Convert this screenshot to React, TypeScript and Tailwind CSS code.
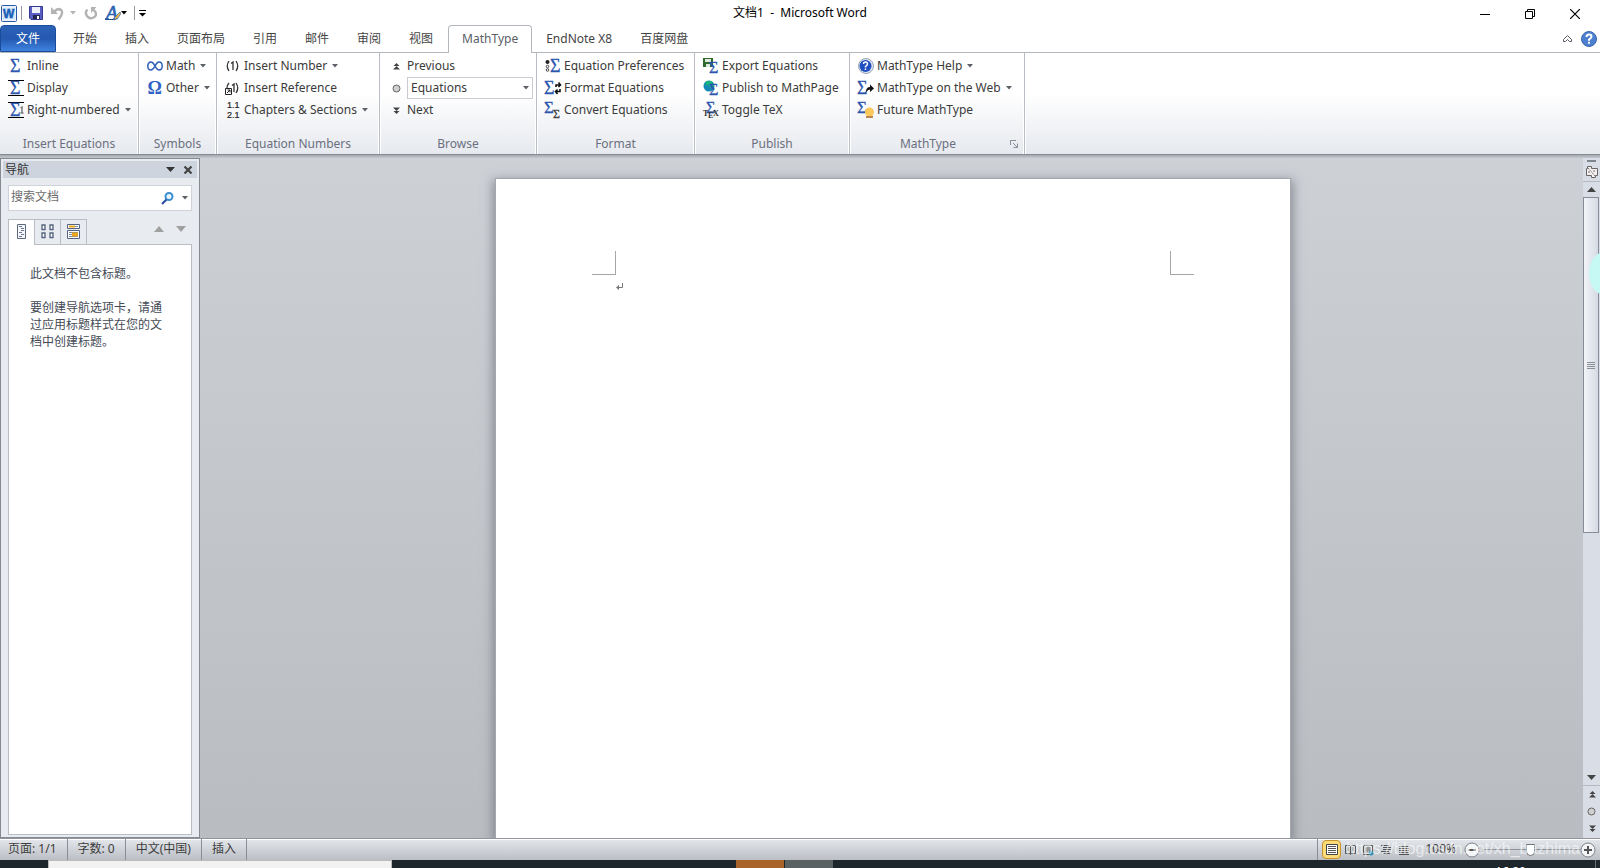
import * as React from 'react';

const Caret: React.FC<{ className?: string }> = ({ className = 'text-[#5c6067]' }) => (
  <svg className={`shrink-0 ${className}`} width="6" height="4" viewBox="0 0 6 4" aria-hidden="true">
    <path d="M0 0h6L3 3.5z" fill="currentColor" />
  </svg>
);

const Icon: React.FC<{ children: React.ReactNode }> = ({ children }) => (
  <svg className="shrink-0 overflow-visible" width="16" height="16" viewBox="0 0 16 16" aria-hidden="true">
    {children}
  </svg>
);

type SigmaProps = { x?: number; y?: number; size?: number; fill?: string };

const Sigma: React.FC<SigmaProps> = ({ x = 2, y = 14, size = 18, fill = '#2a56ad' }) => (
  <text
    x={x}
    y={y}
    fontSize={size}
    fill={fill}
    stroke={fill}
    strokeWidth="0.3"
    fontFamily="Liberation Serif, serif"
  >
    Σ
  </text>
);

const Bars = () => <path d="M0 .5h16M0 15.5h16" stroke="#000" />;

const InlineIcon = () => (
  <Icon>
    <Sigma />
  </Icon>
);

const DisplayIcon = () => (
  <Icon>
    <Bars />
    <Sigma />
  </Icon>
);

const RightNumberedIcon = () => (
  <Icon>
    <Bars />
    <Sigma />
    <path d="M12.500 6l1.500-1v6M12.500 11h3" stroke="#777" strokeWidth="1.4" fill="none" />
  </Icon>
);

const InfinityIcon = () => (
  <Icon>
    <path
      d="M8 8C6.500 5 5.500 4 4 4C2 4 .8 5.800.8 8S2 12 4 12C5.500 12 6.500 11 8 8S10.500 4 12 4C14 4 15.200 5.800 15.200 8S14 12 12 12C10.500 12 9.500 11 8 8"
      fill="none"
      stroke="#2f5fb8"
      strokeWidth="1.500"
    />
  </Icon>
);

const OmegaIcon = () => (
  <Icon>
    <text x="0.500" y="14" fontSize="18" fontWeight="700" fill="#2f62c4" fontFamily="Liberation Serif, serif">
      Ω
    </text>
  </Icon>
);

const InsertNumberIcon = () => (
  <Icon>
    <path d="M4 3Q.5 8 4 13M11 3q3.500 5 0 10M6 5.500L8 4v8" fill="none" stroke="#333" strokeWidth="1.300" />
  </Icon>
);

const InsertReferenceIcon = () => (
  <Icon>
    <path d="M4 3Q2 5 2 8M11 3q3.500 5 0 10M7 5.500L9 4v8" fill="none" stroke="#333" strokeWidth="1.300" />
    <path d="M.5 8.500h6v6h-6z" fill="#fff" stroke="#222" />
    <path d="M2 13l3-3M2.500 10H5v2.500" fill="none" stroke="#222" />
  </Icon>
);

const ChaptersIcon = () => (
  <Icon>
    <g fontSize="9" fill="#222" stroke="#222" strokeWidth="0.200" fontFamily="Liberation Sans, sans-serif">
      <text x="2" y="6">
        1.1
      </text>
      <text x="2" y="16">
        2.1
      </text>
    </g>
  </Icon>
);

const DoubleArrow: React.FC<{ down?: boolean }> = ({ down }) => (
  <svg className={down ? 'ml-px rotate-180' : 'ml-px'} width="7" height="7" viewBox="0 0 7 7" aria-hidden="true">
    <path d="M3.500 0L6.500 3h-6zM3.500 3L7 6.500H0z" fill="#444" />
  </svg>
);

const Dot = () => (
  <svg width="9" height="9" viewBox="0 0 9 9" aria-hidden="true">
    <circle cx="4.500" cy="4.500" r="3.500" fill="#d0d0d0" stroke="#666" />
  </svg>
);

const PreferencesIcon = () => (
  <Icon>
    <circle cx="2.500" cy="4" r="2" fill="#222" />
    <circle cx="2.500" cy="8.500" r="1.300" fill="#fff" stroke="#444" />
    <circle cx="2.500" cy="12" r="1.300" fill="#fff" stroke="#444" />
    <Sigma x={5} />
  </Icon>
);

const FormatIcon = () => (
  <Icon>
    <Sigma x={-1} />
    <path
      d="M11 7V5h4M13.500 2.500L15.500 5l-2 2M15 9v2.500h-4M12.500 9.500l-2 2 2 2.500"
      fill="none"
      stroke="#111"
      strokeWidth="1.600"
    />
  </Icon>
);

const ConvertIcon = () => (
  <Icon>
    <Sigma x={-1} y={11} size={17} />
    <Sigma x={8} y={16} size={12} fill="#444" />
  </Icon>
);

const ExportIcon = () => (
  <Icon>
    <path d="M0 0h10v9H0z" fill="#2f6b2c" />
    <path d="M2 1h6v3H2zM3 6h4v3H3z" fill="#dfe9dd" />
    <Sigma x={6} y={15} size={16} />
  </Icon>
);

const PublishIcon = () => (
  <Icon>
    <circle cx="6" cy="6" r="5.500" fill="#1788b5" />
    <path d="M3 1.500q4-2 7 1l1 4-4 1-2-3-3 1z" fill="#18b57a" />
    <Sigma x={6} y={15} size={16} />
  </Icon>
);

const TexIcon = () => (
  <Icon>
    <Sigma x={3} y={11} size={16} />
    <g fontSize="8" fontWeight="700" fill="#333" fontFamily="Liberation Serif, serif">
      <text x="0" y="14">
        T
      </text>
      <text x="5" y="16">
        E
      </text>
      <text x="10" y="14">
        X
      </text>
    </g>
  </Icon>
);

const HelpIcon = () => (
  <Icon>
    <circle cx="8" cy="8" r="7.500" fill="#dfe5ef" stroke="#9aa5ba" />
    <circle cx="7.500" cy="8" r="6" fill="#1f4fc0" />
    <path d="M5.500 6q0-2 2-2t2 2q0 1-2 2.500v1M7.500 10.500V12" fill="none" stroke="#fff" strokeWidth="1.500" />
  </Icon>
);

const WebIcon = () => (
  <Icon>
    <Sigma x={-1} />
    <path d="M8 12q0-5 4-5V4.500l4 4-4 3.500V9.500q-2 0-4 2.500z" fill="#111" />
  </Icon>
);

const FutureIcon = () => (
  <Icon>
    <Sigma x={-1} y={11} size={17} />
    <circle cx="11.500" cy="10" r="4.500" fill="#fbc85a" />
    <path d="M8 15h7" stroke="#a8641c" strokeWidth="1.500" />
  </Icon>
);

type Command = { label: string; icon: React.ReactNode; menu?: boolean };

const CommandButton: React.FC<{ command: Command }> = ({ command }) => (
  <button type="button" className="flex h-[22px] items-center gap-[3px] whitespace-nowrap text-[#3b3b3b]">
    {command.icon}
    <span>{command.label}</span>
    {command.menu && (
      <span className="pl-0.5">
        <Caret />
      </span>
    )}
  </button>
);

type GroupProps = { title: string; width: string; launcher?: boolean; children: React.ReactNode };

const Group: React.FC<GroupProps> = ({ title, width, launcher, children }) => (
  <section
    className={`relative flex shrink-0 flex-col border-r border-[#b9bdc5] pt-0.5 shadow-[1px_0_0_#fff,inset_-1px_0_0_#fff] ${width}`}
  >
    <div className="flex flex-1 flex-col items-start pl-2">{children}</div>
    <div className="flex h-5 items-center">
      <h2 className="flex-1 text-center leading-5 text-[#6b7080]">{title}</h2>
      {launcher && (
        <button type="button" aria-label="MathType options" className="w-[18px] pl-1">
          <svg width="8" height="8" viewBox="0 0 8 8">
            <path d="M.5 5V.5H6M3 3l4 4M7.500 3.500v4h-4" fill="none" stroke="#8a8f98" />
          </svg>
        </button>
      )}
    </div>
  </section>
);

const equationCommands: Command[] = [
  { label: 'Inline', icon: <InlineIcon /> },
  { label: 'Display', icon: <DisplayIcon /> },
  { label: 'Right-numbered', icon: <RightNumberedIcon />, menu: true },
];
const symbolCommands: Command[] = [
  { label: 'Math', icon: <InfinityIcon />, menu: true },
  { label: 'Other', icon: <OmegaIcon />, menu: true },
];
const numberCommands: Command[] = [
  { label: 'Insert Number', icon: <InsertNumberIcon />, menu: true },
  { label: 'Insert Reference', icon: <InsertReferenceIcon /> },
  { label: 'Chapters & Sections', icon: <ChaptersIcon />, menu: true },
];
const formatCommands: Command[] = [
  { label: 'Equation Preferences', icon: <PreferencesIcon /> },
  { label: 'Format Equations', icon: <FormatIcon /> },
  { label: 'Convert Equations', icon: <ConvertIcon /> },
];
const publishCommands: Command[] = [
  { label: 'Export Equations', icon: <ExportIcon /> },
  { label: 'Publish to MathPage', icon: <PublishIcon /> },
  { label: 'Toggle TeX', icon: <TexIcon /> },
];
const mathTypeCommands: Command[] = [
  { label: 'MathType Help', icon: <HelpIcon />, menu: true },
  { label: 'MathType on the Web', icon: <WebIcon />, menu: true },
  { label: 'Future MathType', icon: <FutureIcon /> },
];

const renderCommands = (commands: Command[]) =>
  commands.map((command) => <CommandButton key={command.label} command={command} />);

const QuickAccess = () => (
  <div className="flex items-center pl-px">
    <svg width="16" height="17" viewBox="0 0 16 17" aria-hidden="true">
      <rect x=".5" y=".5" width="15" height="16" rx="1" fill="#e9f1fb" stroke="#2b5aa6" />
      <rect x="2" y="3" width="12" height="11" fill="#cfe6fa" />
      <text x="2" y="13" fontSize="12" fontWeight="700" fill="#1c5fb8" stroke="#1c5fb8" strokeWidth="0.500" fontFamily="Liberation Sans, sans-serif">
        W
      </text>
    </svg>
    <span className="ml-1 h-3.5 w-px bg-[#9a9a9a]" />
    <button type="button" aria-label="保存" className="ml-[7px]">
      <svg width="14" height="14" viewBox="0 0 14 14">
        <path d="M.5.5h13v13H2L.5 12z" fill="#5b5fc4" stroke="#34388f" />
        <path d="M3 1h8v6H3z" fill="#eef1fa" />
        <path d="M4 9h7v4H4z" fill="#23264f" />
        <path d="M8 10h2v3H8z" fill="#fff" />
      </svg>
    </button>
    <button type="button" aria-label="撤消" className="ml-2 flex items-center gap-1.5">
      <svg width="13" height="13" viewBox="0 0 13 13">
        <path d="M3 5q4-4.500 7-2t-2.500 9.500" fill="none" stroke="#b3b3b3" strokeWidth="2.500" />
        <path d="M0 0v7h7z" fill="#b3b3b3" />
      </svg>
      <Caret className="text-[#b3b3b3]" />
    </button>
    <button type="button" aria-label="重复" className="ml-2">
      <svg width="13" height="13" viewBox="0 0 13 13">
        <path d="M3.500 2.500q-3 3-.5 6.500t6.500 1.500T11 4.500L9 2.500" fill="none" stroke="#b3b3b3" strokeWidth="2.400" />
        <path d="M7 0h5.500L7 6z" fill="#b3b3b3" />
      </svg>
    </button>
    <button type="button" aria-label="文本效果" className="ml-2 flex items-center">
      <svg width="16" height="17" viewBox="0 0 16 17">
        <text x="1" y="14" fontSize="19" fontStyle="italic" fill="#2a62b4" stroke="#2a62b4" strokeWidth="0.600" fontFamily="Liberation Serif, serif">
          A
        </text>
        <path d="M0 14.500h10" stroke="#24508f" />
        <path d="M9 15l1-3 5-5 1 1.500-3.500 5z" fill="#e6b54a" stroke="#3d6daf" strokeWidth=".8" />
      </svg>
      <Caret className="text-black" />
    </button>
    <span className="ml-[7px] h-3.5 w-px bg-[#9a9a9a]" />
    <button type="button" aria-label="自定义快速访问工具栏" className="ml-1">
      <svg width="7" height="7" viewBox="0 0 7 7">
        <path d="M0 .5h7" stroke="#000" />
        <path d="M0 3h7L3.500 6.500z" />
      </svg>
    </button>
  </div>
);

const WindowButtons = () => (
  <div className="flex justify-end pr-[3px] pt-0.5">
    <button type="button" aria-label="最小化" className="flex w-[45px] items-center justify-center">
      <svg width="10" height="10" viewBox="0 0 10 10">
        <path d="M0 5.500h10" stroke="#000" />
      </svg>
    </button>
    <button type="button" aria-label="还原" className="flex w-[45px] items-center justify-center">
      <svg width="10" height="10" viewBox="0 0 10 10">
        <path d="M.5 2.500h7v7h-7zM2.500 2V.5h7v7H8" fill="none" stroke="#000" />
      </svg>
    </button>
    <button type="button" aria-label="关闭" className="flex w-[45px] items-center justify-center">
      <svg width="10" height="10" viewBox="0 0 10 10">
        <path d="M0 0l10 10M10 0L0 10" stroke="#000" strokeWidth="1.200" />
      </svg>
    </button>
  </div>
);

const tabs = ['开始', '插入', '页面布局', '引用', '邮件', '审阅', '视图', 'MathType', 'EndNote X8', '百度网盘'];

const RibbonTabs = () => (
  <nav className="flex h-[27px] text-[#444]">
    <button
      type="button"
      className="mr-[3px] h-[27px] w-14 rounded-t-sm border border-[#1b4c9c] bg-linear-to-b from-[#2b62b5] via-[#2459b0] to-[#3f83e0] text-white"
    >
      文件
    </button>
    {tabs.map((tab) =>
      tab === 'MathType' ? (
        <button
          key={tab}
          type="button"
          aria-current="page"
          className="relative z-10 ml-px h-7 rounded-t-sm border border-b-0 border-[#b3b7be] bg-white px-[13px] pb-px text-[#5a5e66]"
        >
          {tab}
        </button>
      ) : (
        <button key={tab} type="button" className="px-3.5">
          {tab}
        </button>
      ),
    )}
    <div className="flex flex-1 items-center justify-end gap-[9px] pr-[3px]">
      <button type="button" aria-label="功能区最小化">
        <svg width="9" height="7" viewBox="0 0 9 7">
          <path d="M.5 4.500l4-4 4 4v2h-2l-2-2-2 2h-2z" fill="#fff" stroke="#555b66" />
        </svg>
      </button>
      <button type="button" aria-label="帮助">
        <svg width="16" height="16" viewBox="0 0 16 16">
          <circle cx="8" cy="8" r="7.500" fill="#4c80cf" stroke="#3a67b0" />
          <path d="M5.500 6q0-2.500 2.500-2.500t2.500 2.300q0 1.200-2.500 2.700v1.200M8 10.800v1.900" fill="none" stroke="#fff" strokeWidth="2" />
        </svg>
      </button>
    </div>
  </nav>
);

const Ribbon = () => (
  <div className="flex h-[103px] border-t border-b border-t-[#b3b7be] border-b-[#868b93] bg-linear-to-b from-white from-40% to-[#e6e9ee]">
    <Group title="Insert Equations" width="w-[139px]">
      {renderCommands(equationCommands)}
    </Group>
    <Group title="Symbols" width="w-[78px]">
      {renderCommands(symbolCommands)}
    </Group>
    <Group title="Equation Numbers" width="w-[163px]">
      {renderCommands(numberCommands)}
    </Group>
    <Group title="Browse" width="w-[157px]">
      <div className="grid grid-cols-[9px_126px] items-center gap-x-1.5 pl-1 text-[#3b3b3b]">
        <DoubleArrow />
        <button type="button" className="h-[22px] text-left">
          Previous
        </button>
        <Dot />
        <div className="relative flex h-[22px] items-center">
          <select
            aria-label="Browse by"
            className="h-[22px] w-full appearance-none border border-[#c9ccd2] bg-white pl-[3px] text-[#3b3b3b]"
          >
            <option>Equations</option>
          </select>
          <span className="pointer-events-none absolute right-1 flex">
            <Caret />
          </span>
        </div>
        <DoubleArrow down />
        <button type="button" className="h-[22px] text-left">
          Next
        </button>
      </div>
    </Group>
    <Group title="Format" width="w-[158px]">
      {renderCommands(formatCommands)}
    </Group>
    <Group title="Publish" width="w-[155px]">
      {renderCommands(publishCommands)}
    </Group>
    <Group title="MathType" width="w-[175px]" launcher>
      {renderCommands(mathTypeCommands)}
    </Group>
  </div>
);

const NavigationPane = () => (
  <aside className="flex w-[200px] shrink-0 flex-col border border-[#868b93] bg-[#e8ebf0]">
    <header className="mx-0.5 mt-0.5 flex h-[17px] items-center bg-[#cdd4de] pr-[5px] pl-0.5 text-[#333]">
      <h2 className="flex-1 leading-4">导航</h2>
      <button type="button" aria-label="任务窗格选项">
        <svg width="9" height="5" viewBox="0 0 9 5">
          <path d="M0 0h9L4.500 5z" fill="#333" />
        </svg>
      </button>
      <button type="button" aria-label="关闭窗格" className="ml-[9px]">
        <svg width="8" height="8" viewBox="0 0 8 8">
          <path d="M.5.5l7 7M7.500.5l-7 7" stroke="#444" strokeWidth="2.200" />
        </svg>
      </button>
    </header>
    <div className="mx-[7px] mt-[7px] flex h-[26px] items-center border border-[#cfd2d8] bg-white pr-[3px]">
      <input
        type="text"
        aria-label="搜索文档"
        placeholder="搜索文档"
        className="min-w-0 flex-1 pb-0.5 pl-0.5 outline-none placeholder:text-[#6d6d6d]"
      />
      <button type="button" aria-label="搜索" className="mr-2">
        <svg width="13" height="13" viewBox="0 0 13 13">
          <circle cx="8" cy="4.500" r="3.500" fill="#eaf6fd" stroke="#3a8fd0" strokeWidth="2" />
          <path d="M5.500 7.500L1 12" stroke="#2b4fa3" strokeWidth="2.200" />
        </svg>
      </button>
      <Caret />
    </div>
    <div className="mx-[7px] mt-2 flex h-[26px]">
      <button
        type="button"
        aria-label="浏览标题"
        className="relative z-10 flex w-[26px] items-center justify-center border-t border-l border-[#b9bdc4] bg-white pb-0.5"
      >
        <svg width="9" height="15" viewBox="0 0 9 15">
          <path d="M.5.5h8v14h-8z" fill="#f3f6fb" stroke="#5b6880" />
          <path d="M2 2.500h3M4 4.500h3M4 6.500h3M2 8.500h3M4 10.500h3M2 12.500h3" stroke="#6d7a92" />
        </svg>
      </button>
      <button
        type="button"
        aria-label="浏览页面"
        className="flex w-[27px] items-center justify-center border border-[#b9bdc4] pb-0.5"
      >
        <svg width="13" height="15" viewBox="0 0 13 15">
          <path d="M1 1h3v4.500H1zM9 1h3v4.500H9zM1 9h3v4.500H1zM9 9h3v4.500H9z" fill="#fff" stroke="#54637f" strokeWidth="1.300" />
        </svg>
      </button>
      <button
        type="button"
        aria-label="浏览搜索结果"
        className="flex w-[26px] items-center justify-center border border-l-0 border-[#b9bdc4] pb-0.5"
      >
        <svg width="13" height="15" viewBox="0 0 13 15">
          <path d="M.5.5h12v4H.5zM.5 6.500h12v8H.5z" fill="#fff" stroke="#54637f" />
          <path d="M2 8.500h9M2 10.500h9M2 12.500h9M2 2.500h9" stroke="#7b879d" />
          <path d="M2 1.500h6v2H2zM5 8.500h6v4H5z" fill="#eba81e" />
        </svg>
      </button>
      <div className="flex flex-1 items-start justify-end gap-3 border-b border-[#b9bdc4] pt-[7px] pr-1.5">
        <button type="button" aria-label="上一标题">
          <svg width="10" height="6" viewBox="0 0 10 6">
            <path d="M0 6h10L5 0z" fill="#a0a0a0" />
          </svg>
        </button>
        <button type="button" aria-label="下一标题">
          <svg width="10" height="6" viewBox="0 0 10 6">
            <path d="M0 0h10L5 6z" fill="#a0a0a0" />
          </svg>
        </button>
      </div>
    </div>
    <div className="mx-[7px] mb-0.5 flex-1 border border-t-0 border-[#b9bdc4] bg-white px-[21px] pt-5 leading-[17px] text-[#444a55]">
      <p>此文档不包含标题。</p>
      <p className="mt-[17px]">要创建导航选项卡，请通过应用标题样式在您的文档中创建标题。</p>
    </div>
  </aside>
);

const DocumentArea = () => (
  <main className="flex flex-1 justify-center overflow-hidden bg-linear-to-b from-[#cdd0d5] to-[#b9bcc0] pt-5 pl-[3px]">
    <article className="flex w-[796px] shrink-0 items-start justify-between border border-b-0 border-[#a4a8ae] bg-white px-24 pt-[72px] shadow-[0_4px_10px_2px_rgba(90,95,105,0.6)]">
      <div>
        <div className="size-6 border-r border-b border-[#a6a6a6]" />
        <svg className="mt-2 ml-6" width="7" height="7" viewBox="0 0 7 7" aria-hidden="true">
          <path d="M6.500 0v4.500H1" fill="none" stroke="#777" />
          <path d="M0 4.500L3 2v5z" fill="#777" />
        </svg>
      </div>
      <div className="size-6 border-b border-l border-[#a6a6a6]" />
    </article>
  </main>
);

const ScrollRail = () => (
  <div className="relative flex w-[17px] shrink-0 flex-col items-center overflow-hidden bg-[#d9dde6]">
    <span className="mt-0.5 h-0.5 w-[9px] shrink-0 bg-[#7f858c]" />
    <button type="button" aria-label="标尺" className="mt-1 h-3">
      <svg width="12" height="12" viewBox="0 0 12 12">
        <path d="M1.500.5h4v2h6v7h-2v2h-4v-2h-5v-7h1z" fill="#f4eef0" stroke="#666" />
        <path d="M2 2l7 8M8 4v2M3 5v2" stroke="#777" strokeDasharray="2 1" />
      </svg>
    </button>
    <span className="mt-[3px] h-px w-full shrink-0 bg-[#b4b9c3]" />
    <button type="button" aria-label="向上滚动" className="flex h-[15px] shrink-0 items-center">
      <svg width="9" height="5" viewBox="0 0 9 5">
        <path d="M0 5h9L4.500 0z" fill="#444" />
      </svg>
    </button>
    <div className="flex w-full flex-1 flex-col">
      <div className="flex h-[336px] w-4 flex-col items-center justify-center gap-px border border-[#868c98] bg-linear-to-r from-[#f2f4f8] to-[#d5dae3]">
        <span className="h-px w-2 bg-[#8a8f98]" />
        <span className="h-px w-2 bg-[#8a8f98]" />
        <span className="h-px w-2 bg-[#8a8f98]" />
        <span className="h-px w-2 bg-[#8a8f98]" />
      </div>
    </div>
    <button type="button" aria-label="向下滚动" className="flex h-4 items-center">
      <svg width="9" height="5" viewBox="0 0 9 5">
        <path d="M0 0h9L4.500 5z" fill="#444" />
      </svg>
    </button>
    <div className="flex w-full flex-col items-center border-t border-[#b4b9c3] pb-px">
      <button type="button" aria-label="前一页" className="flex h-[17px] items-center">
        <DoubleArrow />
      </button>
      <button type="button" aria-label="选择浏览对象" className="flex h-[17px] items-center">
        <Dot />
      </button>
      <button type="button" aria-label="下一页" className="flex h-[17px] items-center">
        <DoubleArrow down />
      </button>
    </div>
    {/* floating assistant bubble that peeks in from the screen edge */}
    <div className="absolute top-[94px] -right-5 h-[43px] w-[31px] rounded-[50%] bg-[#c6f8f4]" />
  </div>
);

const statusItems = ['页面: 1/1', '字数: 0', '中文(中国)', '插入'];

const viewIcons = [
  { label: '阅读版式视图', path: 'M1.500 1.500h4l1 1 1-1h4v8h-4l-1 1-1-1h-4zM6.500 2v8M3 4h2M3 6h2M8 4h2M8 6h2' },
  { label: 'Web 版式视图', path: 'M1.500 1.500h9v9h-9zM3 4h6M3 6h6M3 8h3' },
  { label: '大纲视图', path: 'M1 1.500h8M3 3.500h8M3 5.500h8M1 7.500h8M3 9.500h8' },
  { label: '草稿', path: 'M1 2.500h10M1 4.500h10M1 6.500h10M1 8.500h10M1 10.500h10' },
];

const StatusBar = () => (
  <footer className="relative flex h-[22px] shrink-0 items-stretch border-t border-[#8f949d] bg-linear-to-b from-[#e4e7eb] to-[#bbbfc5] text-[#3d3d3d] shadow-[inset_0_1px_0_#fff]">
    {statusItems.map((item) => (
      <button key={item} type="button" className="border-r border-[#8a8f97] px-2.5 pb-0.5 first:pl-2">
        {item}
      </button>
    ))}
    <div className="flex flex-1 items-center justify-end pr-1">
      <span className="h-full w-px bg-[#8a8f97]" />
      <button
        type="button"
        aria-label="页面视图"
        className="ml-1 flex h-[19px] w-[19px] items-center justify-center rounded-sm border border-[#c8932c] bg-[#fcdc78]"
      >
        <svg width="12" height="11" viewBox="0 0 12 11">
          <path d="M.5.5h11v10H.5z" fill="#fff" stroke="#444" />
          <path d="M2 2.500h8M2 4.500h8M2 6.500h8M2 8.500h8" stroke="#555" />
        </svg>
      </button>
      {viewIcons.map((view) => (
        <button key={view.label} type="button" aria-label={view.label} className="flex w-[18px] justify-center">
          <svg width="12" height="12" viewBox="0 0 12 12">
            <path d={view.path} fill="none" stroke="#555" />
            {view.label === 'Web 版式视图' && <circle cx="9" cy="9" r="2.500" fill="#3592b5" />}
          </svg>
        </button>
      ))}
      <button type="button" className="w-[51px] pr-2 pb-0.5 text-right">
        100%
      </button>
      <button type="button" aria-label="缩小">
        <svg width="16" height="16" viewBox="0 0 16 16">
          <circle cx="8" cy="8" r="7" fill="#f3f4f6" stroke="#7d828a" />
          <path d="M4.500 8h7" stroke="#555" strokeWidth="2" />
        </svg>
      </button>
      <input
        type="range"
        aria-label="显示比例"
        min="0"
        max="100"
        defaultValue="50"
        className="h-4 w-[100px] appearance-none bg-transparent bg-[linear-gradient(#8d929a,#8d929a)] bg-[length:100%_1px] bg-center bg-no-repeat [&::-webkit-slider-thumb]:h-3 [&::-webkit-slider-thumb]:w-[9px] [&::-webkit-slider-thumb]:appearance-none [&::-webkit-slider-thumb]:rounded-b-full [&::-webkit-slider-thumb]:border [&::-webkit-slider-thumb]:border-[#70757d] [&::-webkit-slider-thumb]:bg-white"
      />
      <button type="button" aria-label="放大">
        <svg width="16" height="16" viewBox="0 0 16 16">
          <circle cx="8" cy="8" r="7" fill="#f3f4f6" stroke="#7d828a" />
          <path d="M4 8h8M8 4v8" stroke="#555" strokeWidth="2" />
        </svg>
      </button>
    </div>
    <span className="pointer-events-none absolute top-0 right-5 font-['Liberation_Sans',sans-serif] text-base leading-5 text-white/60">
      https://blog.csdn.net/xh_bazhima
    </span>
  </footer>
);

const Taskbar = () => (
  <div className="flex h-2 shrink-0 overflow-hidden bg-[#1e272b]">
    <div className="ml-12 w-[344px] border border-b-0 border-[#bbb] bg-[#f2f2f2]" />
    <div className="ml-[344px] w-12 bg-[#a8642b]" />
    <div className="ml-px w-12 bg-[#5a6264]" />
    <div className="flex flex-1 items-start justify-end pr-1">
      <time className="mt-1 pr-[69px] leading-4 text-white">16:20</time>
      <span className="h-full w-px bg-[#6a7275]" />
    </div>
  </div>
);

const App: React.FC = () => (
  <div className="flex h-screen flex-col overflow-hidden bg-white font-['Noto_Sans','Noto_Sans_CJK_SC',sans-serif] text-xs">
    <header className="grid h-[25px] shrink-0 grid-cols-[1fr_auto_1fr] items-stretch">
      <QuickAccess />
      <h1 className="leading-[26px] whitespace-pre text-black">{'文档1  -  Microsoft Word'}</h1>
      <WindowButtons />
    </header>
    <RibbonTabs />
    <Ribbon />
    <div className="h-[3px] shrink-0 bg-linear-to-b from-[#a4a8af] to-[#c6c9ce]" />
    <div className="flex min-h-0 flex-1">
      <NavigationPane />
      <DocumentArea />
      <ScrollRail />
    </div>
    <StatusBar />
    <Taskbar />
  </div>
);

export default App;
